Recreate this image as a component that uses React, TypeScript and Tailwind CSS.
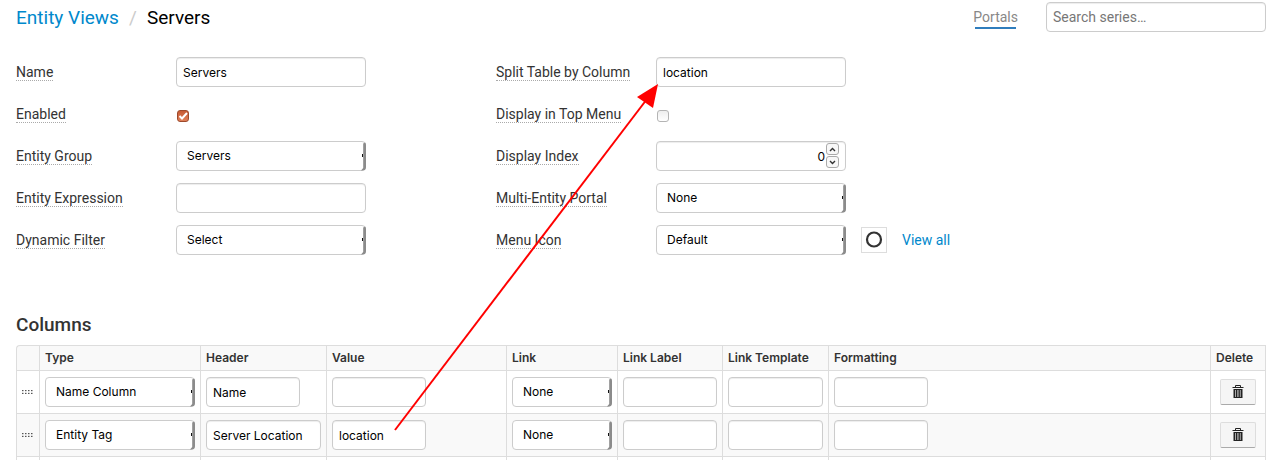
import type { ReactNode } from "react";

const inputClass =
  "block h-[30px] rounded border border-[#ccc] bg-white px-1.5 font-['Inter','Liberation_Sans',sans-serif] text-xs text-black shadow-[inset_0_1px_1px_rgba(0,0,0,0.075)] outline-none";

function Select({ id, label, value, width }: { id?: string; label?: string; value: string; width: string }) {
  return (
    <div className={`relative ${width}`}>
      <select
        id={id}
        aria-label={label}
        defaultValue={value}
        className="block h-[30px] w-full appearance-none rounded border border-[#ccc] bg-white pr-4 pl-2.5 font-['Inter','Liberation_Sans',sans-serif] text-xs text-black outline-none"
      >
        <option>{value}</option>
      </select>
      <svg className="pointer-events-none absolute top-0 right-0" width="6" height="30" viewBox="0 0 6 30" aria-hidden="true">
        <path d="M3.2 2.5 L5 1.5 Q6 2 6 4 V26 Q6 29.5 2.5 29.5 H1 L3.2 27 Z" fill="#8b8b8b" />
        <path d="M2 13h1v3H2z" fill="#111" />
      </svg>
    </div>
  );
}

function Field({ id, label, children }: { id: string; label: string; children: ReactNode }) {
  return (
    <div className="flex h-[30px] items-center">
      <div className="w-40 shrink-0 text-sm leading-4">
        <label htmlFor={id} className="inline-block border-b border-dotted border-[#aaa] text-[#333]">
          {label}
        </label>
      </div>
      {children}
    </div>
  );
}

function Grip() {
  return (
    <svg width="12" height="4" viewBox="0 0 12 4" className="mx-auto" aria-hidden="true">
      {[0, 3, 6, 9].map((x) => (
        <g key={x} fill="#555">
          <rect x={x} y="0" width="1.5" height="1.2" />
          <rect x={x} y="2.8" width="1.5" height="1.2" />
        </g>
      ))}
    </svg>
  );
}

function TrashIcon() {
  return (
    <svg width="12" height="14" viewBox="0 0 12 14" aria-hidden="true">
      <path d="M3.5 2.5V.5h5v2" fill="none" stroke="#222" />
      <path d="M.5 2h11v1H.5z" fill="#222" />
      <path d="M1.5 4h9v9h-9z" fill="#222" />
      <path d="M3 5h1v7H3zM5 5h.8v7H5zM6.4 5h.8v7h-.8zM8.2 5h.8v7h-.8z" fill="#aaa" />
    </svg>
  );
}

const columns = [
  { title: "", width: "w-[23px]" },
  { title: "Type", width: "w-[161px]" },
  { title: "Header", width: "w-[126px]" },
  { title: "Value", width: "w-[180px]" },
  { title: "Link", width: "w-[111px]" },
  { title: "Link Label", width: "w-[105px]" },
  { title: "Link Template", width: "w-[106px]" },
  { title: "Formatting", width: "" },
  { title: "Delete", width: "w-[55px]" },
];

const rows = [
  { type: "Name Column", header: "Name", headerWidth: "w-[94px]", value: "", bg: "bg-white" },
  { type: "Entity Tag", header: "Server Location", headerWidth: "w-[115px]", value: "location", bg: "bg-[#f9f9f9]" },
];

const cell = "border-t border-l border-[#ddd]";

export default function App() {
  return (
    <div className="relative h-screen overflow-hidden bg-white pr-[9px] pl-4 font-['Roboto','Liberation_Sans',sans-serif] text-[#333]">
      <header className="flex items-start justify-between pt-0.5">
        <nav aria-label="Breadcrumb" className="flex h-8 items-center text-[19px] leading-7">
          <a href="#views" className="text-[#0088cc]">Entity Views</a>
          <span className="w-7 text-center text-[#ccc]">/</span>
          <span className="text-black">Servers</span>
        </nav>
        <div className="flex items-start gap-7">
          <a href="#portals" className="flex flex-col items-center pt-[5px] text-sm leading-5 text-[#888]">
            Portals
            <span className="h-0.5 w-[41px] bg-[#2f7dbd]" />
          </a>
          <input
            type="search"
            aria-label="Search series"
            placeholder="Search series…"
            className="h-[30px] w-[220px] rounded border border-[#ccc] bg-white px-1.5 text-sm text-black shadow-[inset_0_1px_1px_rgba(0,0,0,0.075)] outline-none placeholder:text-[#777]"
          />
        </div>
      </header>

      <form className="flex gap-[130px] pt-[23px]">
        <div className="flex flex-col gap-3">
          <Field id="name" label="Name">
            <input id="name" defaultValue="Servers" className={`${inputClass} w-[190px]`} />
          </Field>
          <Field id="enabled" label="Enabled">
            <span className="relative mt-1 h-3 w-3.5">
              <input
                id="enabled"
                type="checkbox"
                defaultChecked
                className="peer ml-px block h-3 w-3 appearance-none rounded-[3px] border border-[#9d4a2c] bg-white checked:bg-linear-to-b checked:from-[#c65a33] checked:to-[#e08058]"
              />
              <svg className="pointer-events-none absolute top-0 left-px hidden peer-checked:block" width="12" height="12" viewBox="0 0 12 12" aria-hidden="true">
                <path d="M2.5 6L5 8.5L10 3" fill="none" stroke="#fff" strokeWidth="2" />
              </svg>
            </span>
          </Field>
          <Field id="group" label="Entity Group">
            <Select id="group" value="Servers" width="w-[190px]" />
          </Field>
          <Field id="expression" label="Entity Expression">
            <input id="expression" className={`${inputClass} w-[190px]`} />
          </Field>
          <Field id="filter" label="Dynamic Filter">
            <Select id="filter" value="Select" width="w-[190px]" />
          </Field>
        </div>

        <div className="flex flex-col gap-3">
          <Field id="split" label="Split Table by Column">
            <input id="split" defaultValue="location" className={`${inputClass} w-[190px]`} />
          </Field>
          <Field id="top-menu" label="Display in Top Menu">
            <input
              id="top-menu"
              type="checkbox"
              className="mt-1 ml-px h-3 w-3 appearance-none rounded-[3px] border border-[#b4b4b4] bg-linear-to-b from-[#eee] to-white checked:from-[#c65a33] checked:to-[#e08058]"
            />
          </Field>
          <Field id="index" label="Display Index">
            <div className="relative">
              <input id="index" inputMode="numeric" defaultValue="0" className={`${inputClass} w-[190px] pr-5 text-right`} />
              <div className="absolute top-0.5 right-[7px] flex flex-col gap-px">
                <button type="button" aria-label="Increase" className="flex h-3 w-[13px] items-center justify-center rounded-[3px] border border-[#aaa] bg-[#f8f8f8]">
                  <svg width="7" height="5" viewBox="0 0 7 5"><path d="M1 4L3.5 1.5L6 4" fill="none" stroke="#333" strokeWidth="1.4" /></svg>
                </button>
                <button type="button" aria-label="Decrease" className="flex h-3 w-[13px] items-center justify-center rounded-[3px] border border-[#aaa] bg-[#f8f8f8]">
                  <svg width="7" height="5" viewBox="0 0 7 5"><path d="M1 1L3.5 3.5L6 1" fill="none" stroke="#333" strokeWidth="1.4" /></svg>
                </button>
              </div>
            </div>
          </Field>
          <Field id="portal" label="Multi-Entity Portal">
            <Select id="portal" value="None" width="w-[190px]" />
          </Field>
          <Field id="icon" label="Menu Icon">
            <Select id="icon" value="Default" width="w-[190px]" />
            <span className="ml-[15px] flex h-[26px] w-[26px] items-center justify-center border border-[#ddd]">
              <svg width="18" height="18" viewBox="0 0 18 18" aria-hidden="true">
                <circle cx="9" cy="8.5" r="7" fill="none" stroke="#333" strokeWidth="2.2" />
              </svg>
            </span>
            <a href="#icons" className="ml-[15px] text-sm text-[#0088cc]">View all</a>
          </Field>
        </div>
      </form>

      <h2 className="mt-[58px] text-[19px] leading-6 font-medium">Columns</h2>

      <table className="mt-2 w-full table-fixed border-separate border-spacing-0 rounded-tl border-r border-[#ddd]">
        <thead>
          <tr className="bg-[#f9f9f9]">
            {columns.map((c, i) => (
              <th
                key={i}
                className={`${cell} ${c.width} h-[25px] p-0 pl-[5px] text-left font-['Inter','Liberation_Sans',sans-serif] text-xs font-semibold whitespace-nowrap first:rounded-tl`}
              >
                {c.title}
              </th>
            ))}
          </tr>
        </thead>
        <tbody>
          {rows.map((r) => (
            <tr key={r.type} className={r.bg}>
              <td className={cell}><Grip /></td>
              <td className={`${cell} py-1.5 pl-[5px]`}><Select label="Type" value={r.type} width="w-[150px]" /></td>
              <td className={`${cell} pl-[5px]`}><input aria-label="Header" defaultValue={r.header} className={`${inputClass} ${r.headerWidth}`} /></td>
              <td className={`${cell} pl-[5px]`}><input aria-label="Value" defaultValue={r.value} className={`${inputClass} w-[94px]`} /></td>
              <td className={`${cell} pl-[5px]`}><Select label="Link" value="None" width="w-[100px]" /></td>
              <td className={`${cell} pl-[5px]`}><input aria-label="Link label" className={`${inputClass} w-[94px]`} /></td>
              <td className={`${cell} pl-[5px]`}><input aria-label="Link template" className={`${inputClass} w-[95px]`} /></td>
              <td className={`${cell} pl-[5px]`}><input aria-label="Formatting" className={`${inputClass} w-[94px]`} /></td>
              <td className={cell}>
                <button type="button" aria-label="Delete column" className="mx-auto flex h-[26px] w-9 items-center justify-center rounded-xs border border-[#ddd] border-b-[#aaa] bg-[#f5f5f5]">
                  <TrashIcon />
                </button>
              </td>
            </tr>
          ))}
          <tr>
            {columns.map((c, i) => (
              <td key={i} className={`${cell} h-[43px]`} />
            ))}
          </tr>
        </tbody>
      </table>

      <svg className="pointer-events-none absolute top-0 left-0" width="700" height="440" viewBox="0 0 700 440" aria-hidden="true">
        <path d="M395 430L647 99" stroke="#f00" strokeWidth="2" />
        <path d="M658 84L637 97L653 108Z" fill="#f00" />
      </svg>
    </div>
  );
}
